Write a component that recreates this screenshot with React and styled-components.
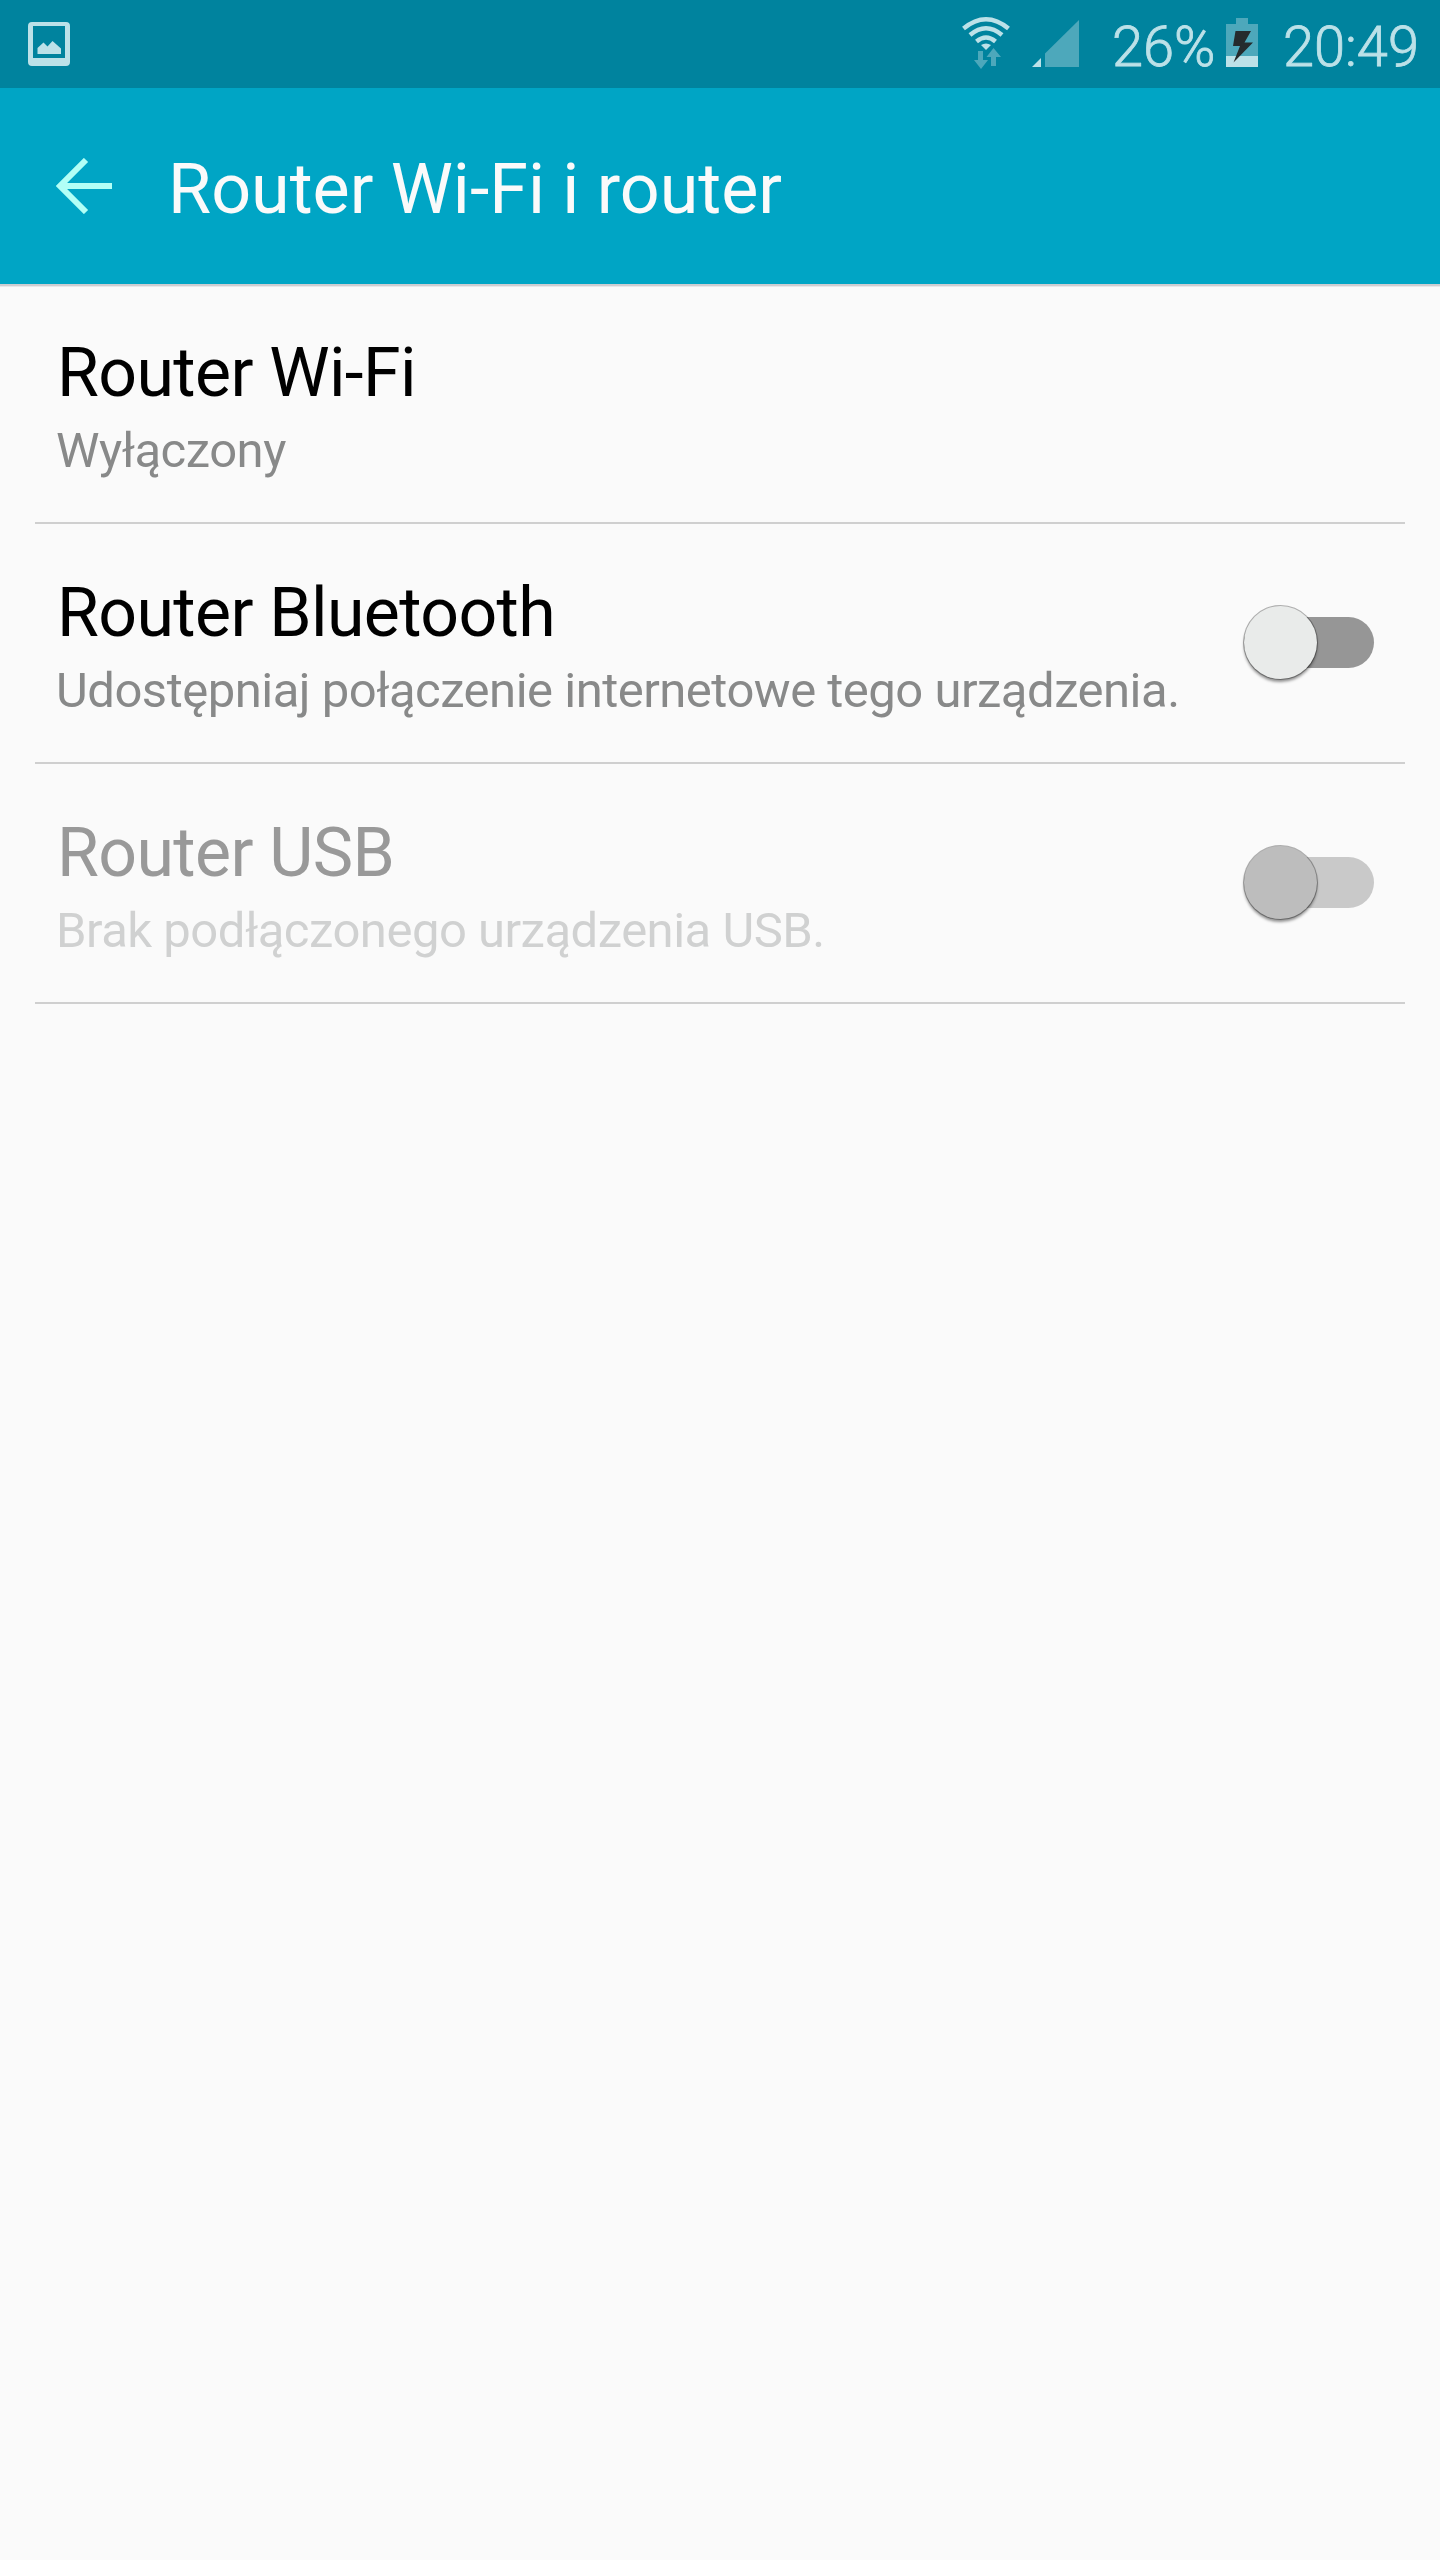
import * as React from "react";
import styled, { createGlobalStyle } from "styled-components";

const GlobalStyle = createGlobalStyle`
    body {
        margin: 0;
        background: #fafafa;
        font-family: Roboto, sans-serif;
    }
`;

const Screen = styled.div`
    display: flex;
    flex-direction: column;
    width: 1440px;
    height: 2560px;
    background: #fafafa;
    overflow: hidden;
`;

const StatusBar = styled.div`
    display: flex;
    align-items: flex-start;
    box-sizing: border-box;
    height: 88px;
    padding: 0 21px 0 28px;
    background: #00839e;
    color: #bce1e8;
`;

const StatusIcons = styled.div`
    display: flex;
    margin-left: auto;
`;

const StatusText = styled.span`
    font-size: 56px;
    font-weight: 300;
    line-height: 94px;
    white-space: nowrap;
    -webkit-text-stroke: 0.8px #bce1e8;
`;

const StatusSvg = styled.svg`
    display: block;
    flex: none;
    margin-right: ${props => props.$gap || 0}px;
`;

const AppBar = styled.header`
    display: flex;
    align-items: center;
    box-sizing: border-box;
    height: 196px;
    padding: 0 56px;
    background: #00a5c5;
    box-shadow: 0 2px 0 #cdcdd1, 0 3px 0 #e8e8ea;
`;

const BackButton = styled.button`
    width: 56px;
    height: 56px;
    margin: 0 56px 0 0;
    padding: 0;
    border: 0;
    background: none;

    svg {
        display: block;
    }
`;

const AppTitle = styled.h1`
    margin: 6px 0 0;
    color: #fafafa;
    font-size: 70px;
    font-weight: 400;
    line-height: 84px;
`;

const List = styled.main`
    display: flex;
    flex-direction: column;
    padding: 0 35px;
`;

const Row = styled.div`
    display: flex;
    align-items: flex-start;
    justify-content: space-between;
    box-sizing: border-box;
    height: 240px;
    padding: 49px 31px 0 21px;
    border-bottom: 2px solid #cfcfcf;
`;

const RowText = styled.div`
    display: flex;
    flex-direction: column;
    white-space: nowrap;
`;

const RowTitle = styled.span`
    padding-left: 1px;
    color: ${props => props.$disabled ? "#999" : "#000"};
    font-size: 68px;
    letter-spacing: -0.6px;
    line-height: 80px;
`;

const RowDesc = styled.span`
    color: ${props => props.$disabled ? "#d0d1d1" : "#888989"};
    font-size: 49px;
    letter-spacing: -0.5px;
    line-height: 76px;
`;

const Track = styled.div`
    display: flex;
    align-items: center;
    width: 130px;
    height: 51px;
    margin-top: 44px;
    border-radius: 26px;
    background: ${props => props.$disabled ? "#c9c9c9" : "#969696"};
`;

const Thumb = styled.div`
    flex: none;
    width: 73px;
    height: 73px;
    border-radius: 50%;
    background: ${props => props.$disabled ? "#bdbdbd" : "#e9ebea"};
    box-shadow: 0 0 0 1px rgba(0, 0, 0, 0.3), 0 3px 3px rgba(0, 0, 0, 0.42);
`;

const rows = [
    { title: "Router Wi-Fi", desc: "Wyłączony" },
    { title: "Router Bluetooth", desc: "Udostępniaj połączenie internetowe tego urządzenia.", toggle: true },
    { title: "Router USB", desc: "Brak podłączonego urządzenia USB.", toggle: true, disabled: true }
];

const PictureIcon = () => (
    <StatusSvg width="42" height="88" viewBox="28 0 42 88">
        <path fill="#bce1e8" fillRule="evenodd" d="M32 22H66Q70 22 70 26V62Q70 66 66 66H32Q28 66 28 62V26Q28 22 32 22ZM33 26V58H65V26Z" />
        <path fill="#bce1e8" d="M37.500 54V48L43.500 42.500L47.500 46.500L52.500 41L61 48.500V54Z" />
    </StatusSvg>
);

const WifiIcon = () => (
    <StatusSvg width="50" height="88" viewBox="961 0 50 88" $gap={21}>
        <g fill="none" stroke="#bce1e8" strokeWidth="4.500">
            <path d="M963.500 28.500Q986 10 1008.500 28.500" />
            <path d="M970 35Q986 21.500 1002 35" />
            <path d="M976.500 41.500Q986 33.500 995.500 41.500" />
        </g>
        <path fill="#bce1e8" d="M981 45Q986 42 991 45L986 50Z" />
        <path fill="#4da8bb" d="M978 51H983V60H988L981 69L974 60H978ZM991 66H996V57H1001L993.500 48L986.500 57H991Z" />
    </StatusSvg>
);

const SignalIcon = () => (
    <StatusSvg width="47" height="88" viewBox="1032 0 47 88" $gap={33}>
        <path fill="#bce1e8" d="M1032 67L1041 58V67Z" />
        <path fill="#4da8bb" d="M1045 67V53.500L1079 20V67Z" />
    </StatusSvg>
);

const BatteryIcon = () => (
    <StatusSvg width="43" height="88" viewBox="1215 0 43 88" $gap={24.5}>
        <path fill="#4da8bb" d="M1226 24H1236V18H1248V24H1258V56H1226Z" />
        <rect x="1226" y="56" width="32" height="11" fill="#bce1e8" />
        <path fill="#252b2d" d="M1235.500 31H1251L1244.500 42.500H1253L1233.500 62.500L1240 46H1233Z" />
    </StatusSvg>
);

const Switch = ({ disabled }) => (
    <Track role="switch" aria-checked="false" $disabled={disabled}>
        <Thumb $disabled={disabled} />
    </Track>
);

const App = () => {
    return (
        <>
            <GlobalStyle />
            <Screen>
                <StatusBar>
                    <PictureIcon />
                    <StatusIcons>
                        <WifiIcon />
                        <SignalIcon />
                        <StatusText>26%</StatusText>
                        <BatteryIcon />
                        <StatusText>20:49</StatusText>
                    </StatusIcons>
                </StatusBar>
                <AppBar>
                    <BackButton aria-label="Wstecz">
                        <svg width="56" height="56" viewBox="0 0 56 56">
                            <path d="M30 2L4 28L30 54M4 28H56" fill="none" stroke="#b2fff6" strokeWidth="6" />
                        </svg>
                    </BackButton>
                    <AppTitle>Router Wi-Fi i router</AppTitle>
                </AppBar>
                <List>
                    {rows.map(row => (
                        <Row key={row.title}>
                            <RowText>
                                <RowTitle $disabled={row.disabled}>{row.title}</RowTitle>
                                <RowDesc $disabled={row.disabled}>{row.desc}</RowDesc>
                            </RowText>
                            {row.toggle && <Switch disabled={row.disabled} />}
                        </Row>
                    ))}
                </List>
            </Screen>
        </>
    );
};

export default App;
